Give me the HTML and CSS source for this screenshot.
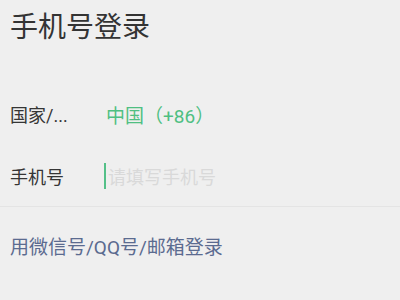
FILE: index.html
```html
<!DOCTYPE html>
<html lang="zh-CN">
<head>
<meta charset="utf-8">
<link rel="stylesheet" href="styles.css">
</head>
<body>
<div class="page">
  <h1 class="title">手机号登录</h1>
  <div class="form">
    <div class="row">
      <div class="label">国家/...</div>
      <div class="value green">中国（+86）</div>
    </div>
    <div class="row row-last">
      <div class="label">手机号</div>
      <div class="value input"><span class="caret"></span><span class="placeholder">请填写手机号</span></div>
    </div>
  </div>
  <div class="link">用微信号/QQ号/邮箱登录</div>
</div>
</body>
</html>
```
FILE: styles.css
```css
html, body {
  margin: 0;
  padding: 0;
  background: #efefef;
}
body {
  font-family: Roboto, "Noto Sans CJK SC", "Noto Sans", sans-serif;
  color: #353535;
  width: 400px;
  height: 300px;
  overflow: hidden;
}
.title {
  margin: 0;
  padding-left: 10px;
  font-size: 28px;
  font-weight: normal;
  line-height: 56px;
  color: #333333;
}
.form {
  margin-top: 27px;
}
.row {
  display: flex;
  align-items: center;
  height: 62px;
  padding-left: 10px;
  font-size: 18px;
}
.row-last {
  height: 61px;
  border-bottom: 1px solid #e4e4e4;
}
.label {
  width: 94px;
  flex: none;
  color: #353535;
}
.value {
  display: flex;
  align-items: center;
}
.green {
  color: #4fbf82;
  padding-left: 2px;
  font-size: 19px;
}
.caret {
  width: 2px;
  height: 26px;
  background: #54c088;
  margin-right: 2px;
}
.placeholder {
  color: #d9d9d9;
}
.link {
  margin-top: 23px;
  padding-left: 10px;
  font-size: 19px;
  line-height: 36px;
  color: #5b6b90;
}
```
